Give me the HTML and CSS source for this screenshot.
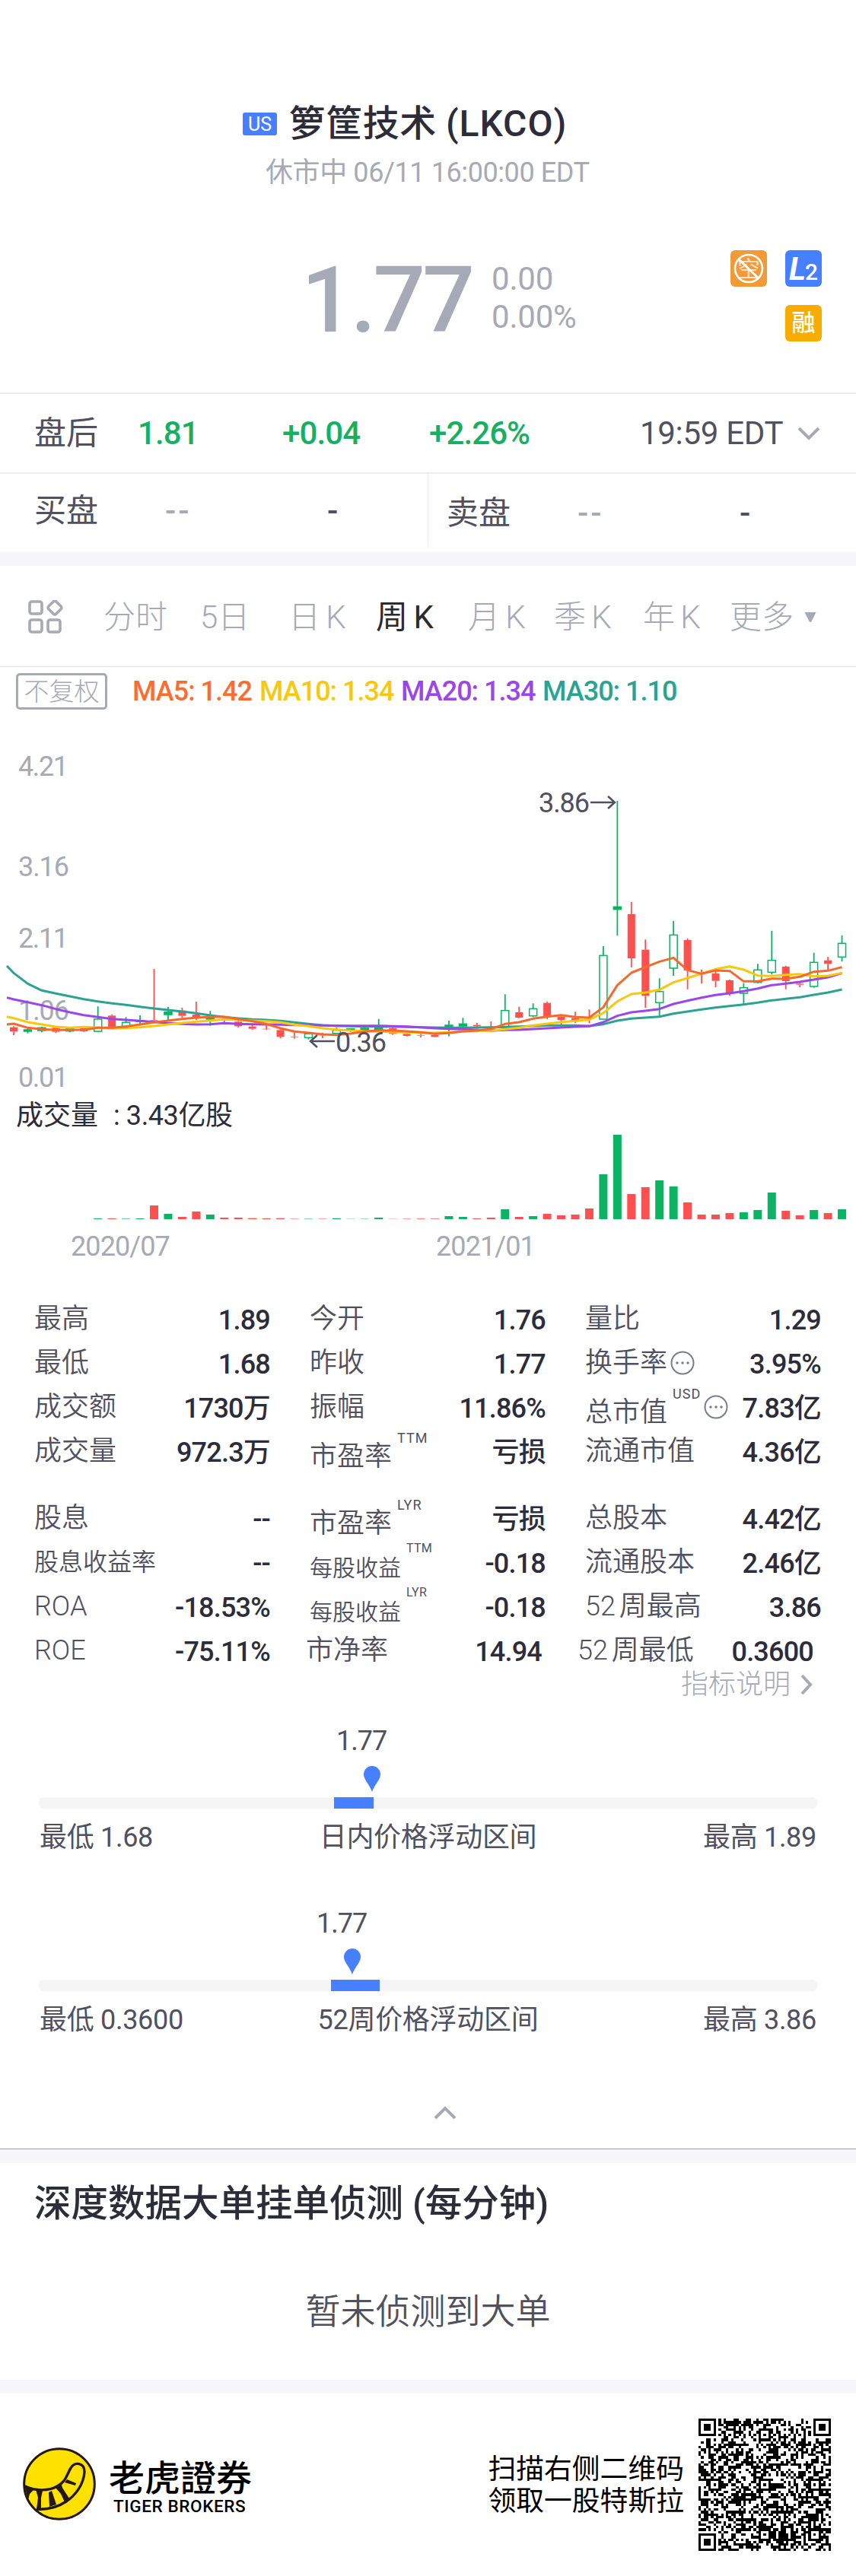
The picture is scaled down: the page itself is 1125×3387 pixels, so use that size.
FILE: index.html
```html
<!DOCTYPE html>
<html lang="zh-CN">
<head>
  <meta charset="UTF-8" />
  <meta name="viewport" content="width=device-width, initial-scale=1.0"/>
  <title>箩筐技术 (LKCO)</title>
  <link rel="stylesheet" href="styles.css">
</head>
<body>
  <header class="header">
    <div class="title">
      <span class="market">US</span>
      <h1>箩筐技术 <span class="code">(LKCO)</span></h1>
    </div>
    <div class="status">休市中 06/11 16:00:00 EDT</div>
    <div class="price-row">
      <div class="price">1.77</div>
      <div class="change">
        <div>0.00</div>
        <div>0.00%</div>
      </div>
      <div class="badges">
        <svg class="badge" viewBox="0 0 48 48">
          <rect width="48" height="48" rx="6" fill="#f19a37"/>
          <text x="24" y="35" class="badge-short" text-anchor="middle">空</text>
          <circle cx="24" cy="24" r="18" fill="none" stroke="#fff" stroke-width="2.6"/>
          <path d="M11 12 37 37" stroke="#fff" stroke-width="3"/>
        </svg>
        <svg class="badge" viewBox="0 0 48 48">
          <rect width="48" height="48" rx="6" fill="#467fff"/>
          <text x="5" y="39" class="badge-l" textLength="22" lengthAdjust="spacingAndGlyphs">L</text>
          <text x="26" y="39" class="badge-2">2</text>
        </svg>
        <span class="badge badge-rong">融</span>
      </div>
    </div>
  </header>

  <section class="after">
    <span class="name">盘后</span>
    <span class="up">1.81</span>
    <span class="up">+0.04</span>
    <span class="up">+2.26%</span>
    <span class="time">19:59 EDT</span>
    <svg class="arrow-down" viewBox="0 0 30 18"><path d="M2 2 15 15 28 2"/></svg>
  </section>

  <section class="book">
    <div class="side">
      <span class="name">买盘</span><span class="none">--</span><span class="dash">-</span>
    </div>
    <div class="side side-ask">
      <span class="name">卖盘</span><span class="none">--</span><span class="dash">-</span>
    </div>
  </section>

  <div class="band"></div>

  <nav class="tabs">
    <svg class="grid-icon" viewBox="0 0 46 45">
      <rect x="2" y="2" width="16" height="16" rx="3"/>
      <rect x="2" y="26" width="16" height="16" rx="3"/>
      <rect x="26" y="26" width="16" height="16" rx="3"/>
      <rect x="28" y="3" width="14" height="14" rx="2.5" transform="rotate(45 35 10)"/>
    </svg>
    <span>分时</span>
    <span>5日</span>
    <span>日 K</span>
    <span class="active">周 K</span>
    <span>月 K</span>
    <span>季 K</span>
    <span>年 K</span>
    <span>更多</span>
    <svg class="caret" viewBox="0 0 18 15"><path d="M1.500 1h15L10.500 13q-1.500 2-3 0z"/></svg>
  </nav>

  <section class="legend">
    <span class="adjust">不复权</span>
    <span class="ma ma5">MA5: 1.42</span>
    <span class="ma ma10">MA10: 1.34</span>
    <span class="ma ma20">MA20: 1.34</span>
    <span class="ma ma30">MA30: 1.10</span>
  </section>

  <svg class="chart" id="kline" viewBox="0 0 1125 500">
    <g class="axis">
      <text x="24" y="80" textLength="66">4.21</text>
      <text x="24" y="212" textLength="67">3.16</text>
      <text x="24" y="306" textLength="66">2.11</text>
      <text x="24" y="401" textLength="67">1.06</text>
      <text x="24" y="489" textLength="66">0.01</text>
    </g>
    <g id="candles"></g>
    <g id="lines"></g>
    <g class="mark">
      <text x="708" y="128" textLength="67">3.86</text>
      <path d="M776 115h32M799 107l9 8-9 8"/>
      <text x="441" y="443" textLength="67">0.36</text>
      <path d="M440 429h-32M417 421l-9 8 9 8"/>
    </g>
  </svg>

  <div class="volume-title">成交量<span>: 3.43亿股</span></div>
  <svg class="volume" id="volume" viewBox="0 0 1125 115"></svg>
  <div class="dates"><span>2020/07</span><span>2021/01</span></div>

  <section class="stats">
    <div class="stat"><label>最高</label><b>1.89</b></div>
    <div class="stat"><label>今开</label><b>1.76</b></div>
    <div class="stat"><label>量比</label><b>1.29</b></div>

    <div class="stat"><label>最低</label><b>1.68</b></div>
    <div class="stat"><label>昨收</label><b>1.77</b></div>
    <div class="stat">
      <label>换手率</label>
      <svg class="more" viewBox="0 0 32 32"><circle cx="16" cy="16" r="14.500"/><path d="M9 16h0M16 16h0M23 16h0"/></svg>
      <b>3.95%</b>
    </div>

    <div class="stat"><label>成交额</label><b>1730万</b></div>
    <div class="stat"><label>振幅</label><b>11.86%</b></div>
    <div class="stat">
      <label class="low">总市值</label><sup>USD</sup>
      <svg class="more" viewBox="0 0 32 32"><circle cx="16" cy="16" r="14.500"/><path d="M9 16h0M16 16h0M23 16h0"/></svg>
      <b>7.83亿</b>
    </div>

    <div class="stat"><label>成交量</label><b>972.3万</b></div>
    <div class="stat"><label class="low">市盈率</label><sup>TTM</sup><b>亏损</b></div>
    <div class="stat"><label>流通市值</label><b>4.36亿</b></div>
  </section>

  <section class="stats stats-second">
    <div class="stat"><label>股息</label><b>--</b></div>
    <div class="stat"><label class="low">市盈率</label><sup>LYR</sup><b>亏损</b></div>
    <div class="stat"><label>总股本</label><b>4.42亿</b></div>

    <div class="stat"><label class="mid">股息收益率</label><b>--</b></div>
    <div class="stat"><label class="low small">每股收益</label><sup class="tiny">TTM</sup><b>-0.18</b></div>
    <div class="stat"><label>流通股本</label><b>2.46亿</b></div>

    <div class="stat"><label>ROA</label><b>-18.53%</b></div>
    <div class="stat"><label class="low small">每股收益</label><sup class="tiny">LYR</sup><b>-0.18</b></div>
    <div class="stat"><label>52 周最高</label><b>3.86</b></div>
  </section>

  <section class="stats stats-last">
    <div class="stat"><label>ROE</label><b>-75.11%</b></div>
    <div class="stat"><label>市净率</label><b>14.94</b></div>
    <div class="stat"><label>52 周最低</label><b>0.3600</b></div>
  </section>

  <div class="explain">
    指标说明
    <svg viewBox="0 0 16 28"><path d="M2 2 13 14 2 26"/></svg>
  </div>

  <section class="range range-day">
    <div class="now">1.77</div>
    <svg class="pin" viewBox="0 0 22 34"><path d="M11 34C8 25 0 18 0 11a11 11 0 0 1 22 0c0 7-8 14-11 23z"/></svg>
    <div class="track"><div class="fill"></div></div>
    <div class="range-labels"><span>最低 1.68</span><span>日内价格浮动区间</span><span>最高 1.89</span></div>
  </section>

  <section class="range range-year">
    <div class="now">1.77</div>
    <svg class="pin" viewBox="0 0 22 34"><path d="M11 34C8 25 0 18 0 11a11 11 0 0 1 22 0c0 7-8 14-11 23z"/></svg>
    <div class="track"><div class="fill"></div></div>
    <div class="range-labels"><span>最低 0.3600</span><span>52周价格浮动区间</span><span>最高 3.86</span></div>
  </section>

  <div class="collapse">
    <svg viewBox="0 0 30 18"><path d="M2 16 15 3 28 16"/></svg>
  </div>

  <div class="band band-line"></div>

  <section class="orders">
    <h2>深度数据大单挂单侦测 (每分钟)</h2>
    <p>暂未侦测到大单</p>
  </section>

  <div class="band"></div>

  <footer class="footer">
    <svg class="logo" viewBox="0 0 96 96">
      <circle cx="48" cy="48" r="46.300" fill="#ffe100" stroke="#231815" stroke-width="3"/>
      <path class="tail" d="M3 51C16 57 33 58 45 51 57 45 58 35 63 27 68 18 81 20 81 32 80 49 69 63 57 71 45 79 32 82 18 81"/>
      <path class="stripe" d="M2 49 15 55 9 61 7 69zM17 55 26 57 24 66 24 81 18 81 20 66zM34 59 38 57 44 75 35 78zM43 53 51 49 52 53 61 67 55 72 50 61zM58 42 70 47 69 50 55 46z"/>
    </svg>
    <div class="brand">
      <div class="brand-cn">老虎證券</div>
      <div class="brand-en">TIGER BROKERS</div>
    </div>
    <div class="scan">扫描右侧二维码<br>领取一股特斯拉</div>
    <svg class="qr" id="qr" viewBox="0 0 53 53" shape-rendering="crispEdges"></svg>
  </footer>

  <script src="chart.js"></script>
</body>
</html>
```
FILE: styles.css
```css
* {
  margin: 0;
  padding: 0;
  box-sizing: border-box;
}

body {
  width: 1125px;
  background: #fff;
  color: #2c2c3a;
  font-family: Roboto, "Noto Sans CJK SC", sans-serif;
  font-size: 36px;
  line-height: 58px;
  white-space: nowrap;
}

svg {
  display: block;
  flex: none;
}

/* header */
.header {
  height: 516px;
  padding-top: 133px;
}

.title {
  display: flex;
  align-items: center;
  height: 60px;
  padding-left: 319px;
}

.market {
  width: 45px;
  height: 30px;
  margin-right: 16px;
  border-radius: 3px;
  background: #467fff;
  color: #fff;
  font-size: 25px;
  line-height: 31px;
  text-align: center;
}

h1 {
  font-size: 48px;
  font-weight: 500;
  letter-spacing: 0.4px;
}

.code {
  letter-spacing: 1px;
}

.status {
  height: 50px;
  margin-top: 9px;
  padding-left: 349px;
  line-height: 50px;
  color: #a6aab6;
  letter-spacing: -0.4px;
}

.price-row {
  display: flex;
  height: 120px;
  margin-top: 77px;
  padding: 0 45px 0 396px;
  color: #a6aab6;
}

.price {
  width: 250px;
  font-size: 121px;
  font-weight: 500;
  line-height: 132px;
  letter-spacing: -4px;
}

.change {
  padding-top: 13px;
  font-size: 42px;
  line-height: 50px;
  letter-spacing: -0.2px;
}

.badges {
  display: flex;
  flex-wrap: wrap;
  justify-content: flex-end;
  gap: 24px;
  width: 120px;
  margin-left: auto;
}

.badge {
  width: 48px;
  height: 48px;
}

.badge-short {
  font-size: 30px;
  fill: #fff;
  opacity: 0.7;
}

.badge-l {
  font-size: 42px;
  font-weight: 700;
  font-style: italic;
  fill: #fff;
}

.badge-2 {
  font-size: 30px;
  font-weight: 500;
  fill: #fff;
}

.badge-rong {
  border-radius: 6px;
  background: #f8ac00;
  color: #fff;
  font-size: 31px;
  font-weight: 500;
  line-height: 48px;
  text-align: center;
}

/* after-hours and order book */
.after {
  display: grid;
  grid-template-columns: 136px 190px 193px 277px 207px 30px;
  align-items: center;
  height: 105px;
  padding-left: 45px;
  border-top: 2px solid #ececee;
  font-size: 42px;
  color: #50505f;
}

.up {
  color: #15b062;
  font-weight: 500;
  letter-spacing: -0.9px;
}

.time {
  letter-spacing: -0.3px;
}

.arrow-down, .collapse svg, .explain svg {
  fill: none;
  stroke: #a6aab6;
  stroke-width: 4;
}

.arrow-down {
  width: 30px;
}

.book {
  display: flex;
  height: 105px;
  border-top: 2px solid #ececee;
  font-size: 42px;
  color: #50505f;
}

.side {
  display: grid;
  grid-template-columns: 172px 213px 60px;
  width: 562px;
  height: 96px;
  padding-left: 45px;
  line-height: 97px;
}

.side-ask {
  padding-left: 24px;
  border-left: 1px solid #ececee;
  line-height: 104px;
}

.none {
  color: #a6aab6;
  letter-spacing: 3px;
}

.none, .dash {
  font-weight: 500;
}

.band {
  height: 18px;
  background: #f6f6fb;
}

/* period tabs */
.tabs {
  display: grid;
  grid-template-columns: 99px 127px 116px 115px 121px 113px 117px 114px 97px 18px;
  align-items: center;
  height: 132px;
  padding: 3px 0 0 37px;
  font-size: 42px;
  font-weight: 300;
  color: #a6aab6;
}

.tabs span {
  word-spacing: -3px;
}

.tabs .active {
  color: #2b2b2b;
  font-weight: 400;
}

.grid-icon {
  width: 46px;
  fill: none;
  stroke: #a6aab6;
  stroke-width: 3.6;
}

.caret {
  width: 18px;
  fill: #a6aab6;
}

.legend {
  display: grid;
  grid-template-columns: 153px 167px 186px 186px 190px;
  align-items: center;
  height: 64px;
  padding-left: 21px;
  border-top: 1px solid #e4e4e6;
}

.adjust {
  width: 120px;
  height: 48px;
  border: 3px solid #a6aab6;
  border-radius: 5px;
  color: #a6aab6;
  font-size: 33px;
  font-weight: 300;
  line-height: 43px;
  text-align: center;
}

.ma {
  font-weight: 500;
  letter-spacing: -1px;
}

.ma5 { color: #fb6c31; }
.ma10 { color: #f8c80e; }
.ma20 { color: #9a46e8; }
.ma30 { color: #2ba392; }

/* chart */
.chart {
  width: 1125px;
  height: 500px;
}

.axis text {
  fill: #a6aab6;
  font-size: 36px;
}

.mark text {
  fill: #50505f;
  font-size: 36px;
}

.mark path {
  fill: none;
  stroke: #50505f;
  stroke-width: 2.5;
}

#lines path {
  fill: none;
  stroke-width: 3;
  stroke-linejoin: round;
}

.volume-title {
  height: 58px;
  margin-top: -2px;
  padding-left: 21px;
}

.volume-title span {
  margin-left: 20px;
  letter-spacing: -0.4px;
}

.volume {
  width: 1125px;
  height: 115px;
  margin-top: -8px;
}

.dates {
  display: flex;
  gap: 354px;
  height: 102px;
  padding: 7px 0 0 93px;
  color: #a6aab6;
  letter-spacing: -0.9px;
}

.dates span {
  width: 126px;
}

/* indicators */
.stats {
  display: grid;
  grid-template-columns: repeat(3, 310px);
  column-gap: 52px;
  padding-left: 45px;
}

.stat {
  display: flex;
  align-items: center;
  height: 58px;
}

.stat label {
  color: #50505f;
  font-weight: 350;
  word-spacing: -4px;
}

.stat b {
  margin-left: auto;
  padding-top: 4px;
  font-weight: 500;
  letter-spacing: -0.8px;
}

.stat .low {
  padding-top: 14px;
}

.stat .mid {
  font-size: 32px;
}

.stat .small {
  padding-top: 16px;
  font-size: 30px;
}

.stat sup {
  align-self: flex-start;
  margin: -6px 0 0 7px;
  color: #50505f;
  font-size: 18px;
  line-height: 36px;
  letter-spacing: 1px;
}

.stat .tiny {
  margin-top: -7px;
  font-size: 16px;
  letter-spacing: 0.3px;
}

.more {
  width: 32px;
  margin-left: 4px;
  fill: none;
  stroke: #7b7b90;
  stroke-width: 2;
  stroke-linecap: round;
}

.more path {
  stroke-width: 3.5;
}

.stats-second {
  margin-top: 30px;
}

.stats-last {
  grid-template-columns: 310px 310px 310px;
  column-gap: 47px;
}

.explain {
  display: flex;
  align-items: center;
  justify-content: flex-end;
  gap: 13px;
  height: 32px;
  padding-right: 57px;
  color: #a6aab6;
  font-weight: 300;
}

.explain svg {
  width: 16px;
}

/* price ranges */
.range {
  height: 240px;
  padding: 0 52px;
  color: #50505f;
}

.range-day {
  margin-top: 29px;
}

.now {
  width: 80px;
  margin-left: 390px;
  letter-spacing: -1px;
}

.pin {
  width: 22px;
  height: 34px;
  margin: 4px 0 7px 426px;
  fill: #467fff;
}

.range-year .now {
  margin-left: 364px;
}

.range-year .pin {
  margin-left: 400px;
}

.track {
  height: 15px;
  margin: 0 -1px;
  border-radius: 6px;
  background: #f5f5f5;
}

.fill {
  width: 52px;
  height: 15px;
  margin-left: 388px;
  background: #467fff;
}

.range-year .fill {
  width: 64px;
  margin-left: 384px;
}

.range-labels {
  display: grid;
  grid-template-columns: 1fr 1fr 1fr;
  margin-top: 9px;
  letter-spacing: -0.3px;
}

.range-labels span:nth-child(2) {
  text-align: center;
}

.range-labels span:nth-child(3) {
  text-align: right;
}

.collapse {
  height: 85px;
  padding: 29px 0 0 570px;
}

.collapse svg {
  width: 30px;
}

.band-line {
  height: 19px;
  border-top: 1px solid #9c9ca0;
}

/* large orders */
.orders {
  height: 285px;
  padding: 24px 45px 0;
}

h2 {
  font-size: 48.500px;
  font-weight: 500;
  line-height: 60px;
}

.orders p {
  margin-top: 82px;
  color: #50505f;
  font-size: 46px;
  font-weight: 350;
  text-align: center;
}

/* footer */
.footer {
  display: flex;
  height: 240px;
  padding: 33px 33px 0 30px;
  color: #000;
}

.logo {
  width: 96px;
  height: 96px;
  margin-top: 38px;
}

.tail {
  fill: none;
  stroke: #231815;
  stroke-width: 3.4;
}

.stripe {
  fill: #231815;
}

.brand {
  width: 190px;
  margin: 47px 0 0 17px;
}

.brand-cn {
  font-family: "Noto Sans CJK TC", sans-serif;
  font-size: 47px;
  font-weight: 500;
  line-height: 56px;
}

.brand-en {
  margin-left: 6px;
  font-size: 22.500px;
  font-weight: 500;
  line-height: 24px;
  letter-spacing: 0.6px;
}

.scan {
  margin: 46px 19px 0 auto;
  font-size: 36.800px;
  line-height: 42px;
}

.qr {
  width: 174px;
  height: 174px;
}
```
FILE: chart.js
```js
const NS = 'http://www.w3.org/2000/svg';
const GREEN = '#0bb363';
const RED = '#ff5050';
const STEP = 18.45;

function add(parent, tag, attrs) {
  const el = document.createElementNS(NS, tag);
  for (const key in attrs) el.setAttribute(key, attrs[key]);
  parent.appendChild(el);
}

// type (r = down, g = flat up, h = hollow up), high, body top, body bottom, low; in thirds of a pixel
const candles = [
  ['r', 1228, 1232, 1249, 1263], ['g', 1232, 1242, 1248, 1256], ['g', 1230, 1234, 1245, 1252],
  ['r', 1232, 1234, 1250, 1254], ['g', 1236, 1238, 1247, 1252], ['r', 1234, 1236, 1248, 1250],
  ['h', 1150, 1200, 1248, 1250], ['r', 1181, 1186, 1234, 1240], ['h', 1192, 1213, 1228, 1232],
  ['g', 1185, 1207, 1210, 1225], ['r', 1002, 1204, 1208, 1212], ['g', 1152, 1172, 1182, 1205],
  ['r', 1155, 1166, 1187, 1195], ['r', 1131, 1182, 1196, 1203], ['g', 1168, 1192, 1200, 1226],
  ['r', 1195, 1200, 1206, 1213], ['r', 1206, 1210, 1228, 1233], ['r', 1224, 1229, 1238, 1243],
  ['r', 1222, 1238, 1240, 1243], ['r', 1238, 1243, 1270, 1276], ['r', 1252, 1270, 1272, 1277],
  ['h', 1255, 1258, 1273, 1280], ['r', 1254, 1262, 1264, 1275], ['h', 1233, 1244, 1256, 1258],
  ['g', 1236, 1238, 1243, 1250], ['g', 1230, 1236, 1243, 1248], ['g', 1199, 1234, 1242, 1246],
  ['r', 1234, 1236, 1258, 1262], ['r', 1254, 1258, 1266, 1268], ['r', 1258, 1263, 1265, 1272],
  ['r', 1260, 1262, 1270, 1271], ['g', 1206, 1224, 1230, 1268], ['g', 1195, 1219, 1227, 1230],
  ['r', 1214, 1223, 1228, 1238], ['r', 1209, 1230, 1232, 1240], ['h', 1102, 1166, 1234, 1236],
  ['r', 1151, 1173, 1194, 1196], ['h', 1138, 1159, 1187, 1192], ['r', 1131, 1136, 1190, 1200],
  ['r', 1186, 1190, 1203, 1222], ['r', 1171, 1196, 1210, 1216], ['r', 1162, 1196, 1198, 1216],
  ['h', 912, 949, 1200, 1202], ['g', 339, 757, 767, 871], ['r', 738, 786, 960, 996],
  ['r', 886, 926, 1108, 1155], ['h', 1039, 1091, 1135, 1190], ['h', 813, 868, 999, 1029],
  ['r', 881, 888, 1008, 1082], ['r', 1004, 1018, 1020, 1060], ['r', 1008, 1020, 1049, 1074],
  ['r', 1044, 1047, 1098, 1108], ['h', 1058, 1076, 1098, 1140], ['h', 982, 1006, 1055, 1058],
  ['h', 851, 968, 1015, 1024], ['r', 990, 993, 1050, 1082], ['r', 1050, 1060, 1064, 1074],
  ['h', 938, 976, 1071, 1076], ['r', 955, 968, 982, 1012], ['h', 870, 901, 955, 973]
];

const candleBox = document.getElementById('candles');
candles.forEach(([type, high, top, bottom, low], i) => {
  const x = 18 + i * STEP;
  const color = type === 'r' ? RED : GREEN;
  add(candleBox, 'path', {
    d: `M${x} ${high / 3}V${top / 3}M${x} ${bottom / 3}V${low / 3}`,
    stroke: color, 'stroke-width': 1.8
  });
  add(candleBox, 'rect', {
    x: x - 5, y: top / 3, width: 10, height: (bottom - top) / 3,
    fill: type === 'h' ? 'none' : color,
    stroke: type === 'r' ? 'none' : color, 'stroke-width': 1.5
  });
});

// the first value sits on the left edge of the plot, the others on the candles
const averages = [
  ['#2ba392', [990, 1018, 1060, 1087, 1099, 1110, 1121, 1130, 1138, 1144, 1151, 1158, 1164, 1170, 1177, 1185, 1192, 1197, 1201, 1203, 1207, 1213, 1219, 1224, 1226, 1228, 1229, 1229, 1230, 1231, 1232, 1233, 1234, 1234, 1233, 1232, 1231, 1229, 1227, 1225, 1225, 1225, 1227, 1220, 1206, 1198, 1194, 1190, 1178, 1170, 1162, 1154, 1148, 1142, 1135, 1126, 1120, 1114, 1104, 1095, 1083]],
  ['#9a46e8', [1115, 1122, 1133, 1145, 1160, 1173, 1184, 1192, 1199, 1203, 1207, 1211, 1216, 1219, 1221, 1220, 1216, 1219, 1220, 1221, 1222, 1223, 1224, 1225, 1226, 1226, 1226, 1226, 1228, 1229, 1232, 1236, 1238, 1240, 1243, 1246, 1243, 1242, 1239, 1236, 1233, 1230, 1228, 1212, 1187, 1173, 1167, 1160, 1140, 1127, 1115, 1105, 1098, 1090, 1079, 1066, 1060, 1053, 1044, 1035, 1019]],
  ['#f8c80e', [1190, 1196, 1212, 1221, 1230, 1234, 1231, 1233, 1237, 1235, 1232, 1227, 1221, 1215, 1210, 1206, 1201, 1203, 1206, 1208, 1213, 1222, 1228, 1236, 1241, 1245, 1247, 1249, 1251, 1252, 1254, 1254, 1252, 1249, 1246, 1246, 1240, 1234, 1225, 1218, 1212, 1207, 1202, 1176, 1130, 1101, 1095, 1084, 1055, 1038, 1020, 1003, 992, 1005, 1028, 1030, 1025, 1022, 1031, 1029, 1018]],
  ['#f56a2c', [1221, 1218, 1234, 1240, 1243, 1243, 1242, 1234, 1234, 1229, 1221, 1213, 1206, 1199, 1194, 1191, 1191, 1200, 1208, 1219, 1236, 1249, 1254, 1260, 1262, 1257, 1249, 1244, 1245, 1248, 1252, 1258, 1255, 1248, 1245, 1239, 1219, 1212, 1198, 1190, 1184, 1192, 1194, 1153, 1066, 1017, 995, 973, 958, 1007, 1021, 1008, 1010, 1051, 1051, 1040, 1041, 1033, 1013, 1009, 995]]
];

const lineBox = document.getElementById('lines');
averages.forEach(([color, values]) => {
  const points = values.map((v, i) => `${i === 0 ? 9 : 18 + (i - 1) * STEP} ${v / 3}`);
  add(lineBox, 'path', { d: 'M' + points.join('L'), stroke: color });
});

// volume bars start at the seventh candle, a negative height is a down week
const volumes = [1, -1, 0.6, 1, -18, 7, -3, -10, 6, -2, -2, -1.3, -1, -1.3, -0.5, 0.5, -0.5, 1.2, 0.3,
  0.4, 2, -0.3, -0.5, -0.7, -0.7, 4, 3, -1, -2, 13, -3, 4, -7, -5, -6, -14, 59, 111, -33, -42, 51, 43,
  -22, -6, -6, -8, 9, 12, 35, -11, -5, 12, -8, 13];

const volumeBox = document.getElementById('volume');
volumes.forEach((v, i) => {
  const h = Math.abs(v);
  add(volumeBox, 'rect', {
    x: 18 + (i + 6) * STEP - 5.5, y: 115 - h, width: 11, height: h, fill: v < 0 ? RED : GREEN
  });
});

// QR block: finder and alignment squares over a seeded module field
const SIZE = 53;
const qr = document.getElementById('qr');
let seed = 20210611;

function next() {
  seed = (seed * 48271) % 2147483647;
  return seed / 2147483647;
}

const grid = [];
for (let y = 0; y < SIZE; y++) {
  grid.push([]);
  for (let x = 0; x < SIZE; x++) grid[y].push(next() < 0.5);
}

for (let i = 8; i < SIZE - 8; i++) {
  grid[6][i] = grid[i][6] = i % 2 === 0;
}

function square(cx, cy, reach, isDark) {
  for (let y = -reach; y <= reach; y++) {
    for (let x = -reach; x <= reach; x++) {
      if (grid[cy + y] && cx + x >= 0 && cx + x < SIZE) {
        grid[cy + y][cx + x] = isDark(Math.max(Math.abs(x), Math.abs(y)));
      }
    }
  }
}

[[3, 3], [49, 3], [3, 49]].forEach(([x, y]) => square(x, y, 4, d => d < 2 || d === 3));
[[26, 6], [6, 26], [26, 26], [46, 26], [26, 46], [46, 46]].forEach(([x, y]) => square(x, y, 2, d => d !== 1));

let d = '';
grid.forEach((row, y) => row.forEach((dark, x) => {
  if (dark) d += `M${x} ${y}h1v1h-1z`;
}));
add(qr, 'path', { d });
```
